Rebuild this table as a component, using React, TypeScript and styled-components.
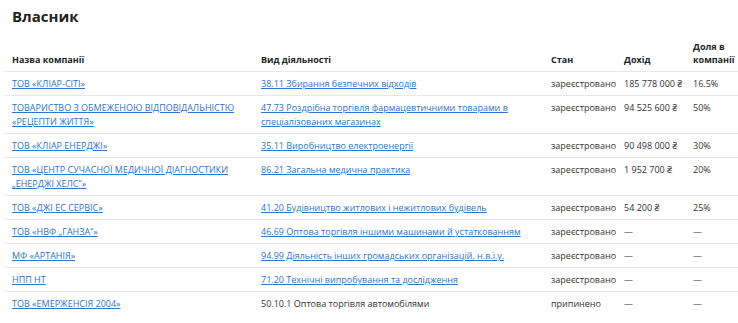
import React from "react";
import styled, { createGlobalStyle } from "styled-components";

const Global = createGlobalStyle`
  html, body { margin: 0; padding: 0; background: #fff; }
  body { font-family: "Open Sans", "Noto Sans", sans-serif; color: #212529; }
`;

const Page = styled.div`
  padding: 6px 0 0 4px;
`;

const Title = styled.h2`
  margin: 0 0 14px 8px;
  font-size: 15px;
  line-height: 20px;
  font-weight: 700;
  color: #222;
`;

const Table = styled.table`
  width: 734px;
  border-collapse: collapse;
  table-layout: fixed;
  font-size: 9px;
  line-height: 14px;
`;

const Th = styled.th<{ $first?: boolean }>`
  text-align: left;
  vertical-align: bottom;
  font-weight: 700;
  line-height: 13px;
  padding: 0 4px 5px ${(p) => (p.$first ? "8px" : "4px")};
  color: #212529;
`;

const Tr = styled.tr`
  border-top: 1px solid #e6e8eb;
`;

const Td = styled.td<{ $first?: boolean; $nowrap?: boolean }>`
  padding: 5px 4px 4px ${(p) => (p.$first ? "8px" : "4px")};
  vertical-align: top;
  color: #333;
  white-space: ${(p) => (p.$nowrap ? "nowrap" : "normal")};
`;

const Link = styled.a`
  color: #3273cc;
  text-decoration: underline;
  text-underline-offset: 1px;
`;

type Row = {
  name: string;
  activity: string;
  activityLink: boolean;
  status: string;
  income: string;
  share: string;
};

const rows: Row[] = [
  { name: "ТОВ «КЛІАР-СІТІ»", activity: "38.11 Збирання безпечних відходів", activityLink: true, status: "зареєстровано", income: "185 778 000 ₴", share: "16.5%" },
  { name: "ТОВАРИСТВО З ОБМЕЖЕНОЮ ВІДПОВІДАЛЬНІСТЮ «РЕЦЕПТИ ЖИТТЯ»", activity: "47.73 Роздрібна торгівля фармацевтичними товарами в спеціалізованих магазинах", activityLink: true, status: "зареєстровано", income: "94 525 600 ₴", share: "50%" },
  { name: "ТОВ «КЛІАР ЕНЕРДЖІ»", activity: "35.11 Виробництво електроенергії", activityLink: true, status: "зареєстровано", income: "90 498 000 ₴", share: "30%" },
  { name: "ТОВ «ЦЕНТР СУЧАСНОЇ МЕДИЧНОЇ ДІАГНОСТИКИ „ЕНЕРДЖІ ХЕЛС“»", activity: "86.21 Загальна медична практика", activityLink: true, status: "зареєстровано", income: "1 952 700 ₴", share: "20%" },
  { name: "ТОВ «ДЖІ ЕС СЕРВІС»", activity: "41.20 Будівництво житлових і нежитлових будівель", activityLink: true, status: "зареєстровано", income: "54 200 ₴", share: "25%" },
  { name: "ТОВ «НВФ „ГАНЗА“»", activity: "46.69 Оптова торгівля іншими машинами й устаткованням", activityLink: true, status: "зареєстровано", income: "—", share: "—" },
  { name: "МФ «АРТАНІЯ»", activity: "94.99 Діяльність інших громадських організацій, н.в.і.у.", activityLink: true, status: "зареєстровано", income: "—", share: "—" },
  { name: "НПП НТ", activity: "71.20 Технічні випробування та дослідження", activityLink: true, status: "зареєстровано", income: "—", share: "—" },
  { name: "ТОВ «ЕМЕРЖЕНСІЯ 2004»", activity: "50.10.1 Оптова торгівля автомобілями", activityLink: false, status: "припинено", income: "—", share: "—" },
];

export default function App() {
  return (
    <>
      <Global />
      <Page>
        <Title>Власник</Title>
        <Table>
          <colgroup>
            <col style={{ width: 253 }} />
            <col style={{ width: 290 }} />
            <col style={{ width: 73 }} />
            <col style={{ width: 69 }} />
            <col style={{ width: 49 }} />
          </colgroup>
          <thead>
            <tr>
              <Th $first>Назва компанії</Th>
              <Th>Вид діяльності</Th>
              <Th>Стан</Th>
              <Th>Дохід</Th>
              <Th>Доля в компанії</Th>
            </tr>
          </thead>
          <tbody>
            {rows.map((r, i) => (
              <Tr key={i}>
                <Td $first>
                  <Link href="#">{r.name}</Link>
                </Td>
                <Td>{r.activityLink ? <Link href="#">{r.activity}</Link> : r.activity}</Td>
                <Td $nowrap>{r.status}</Td>
                <Td $nowrap>{r.income}</Td>
                <Td $nowrap>{r.share}</Td>
              </Tr>
            ))}
          </tbody>
        </Table>
      </Page>
    </>
  );
}
